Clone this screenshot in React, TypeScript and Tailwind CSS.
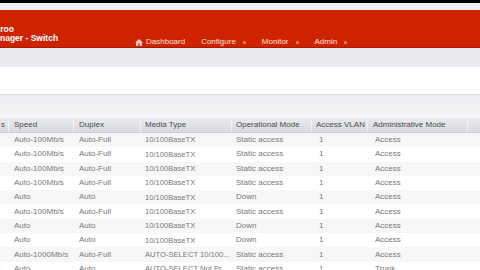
import React from "react";

type Row = {
  speed: string;
  duplex: string;
  media: string;
  mode: string;
  vlan: string;
  admin: string;
};

const rows: Row[] = [
  { speed: "Auto-100Mb/s", duplex: "Auto-Full", media: "10/100BaseTX", mode: "Static access", vlan: "1", admin: "Access" },
  { speed: "Auto-100Mb/s", duplex: "Auto-Full", media: "10/100BaseTX", mode: "Static access", vlan: "1", admin: "Access" },
  { speed: "Auto-100Mb/s", duplex: "Auto-Full", media: "10/100BaseTX", mode: "Static access", vlan: "1", admin: "Access" },
  { speed: "Auto-100Mb/s", duplex: "Auto-Full", media: "10/100BaseTX", mode: "Static access", vlan: "1", admin: "Access" },
  { speed: "Auto", duplex: "Auto", media: "10/100BaseTX", mode: "Down", vlan: "1", admin: "Access" },
  { speed: "Auto-100Mb/s", duplex: "Auto-Full", media: "10/100BaseTX", mode: "Static access", vlan: "1", admin: "Access" },
  { speed: "Auto", duplex: "Auto", media: "10/100BaseTX", mode: "Down", vlan: "1", admin: "Access" },
  { speed: "Auto", duplex: "Auto", media: "10/100BaseTX", mode: "Down", vlan: "1", admin: "Access" },
  { speed: "Auto-1000Mb/s", duplex: "Auto-Full", media: "AUTO-SELECT 10/100...", mode: "Static access", vlan: "1", admin: "Access" },
  { speed: "Auto", duplex: "Auto", media: "AUTO-SELECT Not Pr...", mode: "Static access", vlan: "1", admin: "Trunk" },
];

const NavItem = ({ label, dot = true }: { label: string; dot?: boolean }) => (
  <div className="flex items-center gap-[7px]">
    <span>{label}</span>
    {dot && <span className="w-[3px] h-[3px] rounded-full bg-[#e98a7a]" />}
  </div>
);

const App = () => {
  return (
    <div
      className="w-[480px] h-[270px] overflow-hidden flex flex-col bg-[#eceef2]"
      style={{ fontFamily: '"Liberation Sans", Arial, sans-serif' }}
    >
      <div className="h-[3px] bg-black shrink-0" />
      <div className="h-[7px] bg-[#eef0f5] shrink-0" />

      {/* red header */}
      <div className="h-[38px] shrink-0 bg-[#cf2200] border-b border-[#a51a00] flex text-white">
        <div className="w-[120px] pt-[15px] -ml-[3px] font-bold text-[8.5px] leading-[9px]">
          <div>rroo</div>
          <div className="ml-[3px]">nager - Switch</div>
        </div>
        <div className="flex flex-col pt-[22px]">
          <div className="h-px w-[281px] -ml-[24px] bg-gradient-to-r from-[#cf2200] via-[#ef6a4e] to-[#e4553a]" />
          <div className="flex items-center gap-[16px] text-[8px] mt-[4px] ml-[18px] text-[#fbe4de]">
            <div className="flex items-center gap-[3px]">
              <svg width="8" height="7" viewBox="0 0 8 7">
                <path d="M4 0 L8 3.5 L7 3.5 L7 7 L1 7 L1 3.5 L0 3.5 Z" fill="#f3c8bd" />
                <rect x="3.2" y="4.5" width="1.6" height="2.5" fill="#b54a33" />
              </svg>
              <span>Dashboard</span>
            </div>
            <NavItem label="Configure" />
            <NavItem label="Monitor" />
            <NavItem label="Admin" />
          </div>
        </div>
      </div>

      <div className="h-[19px] shrink-0 bg-[#e8eaef]" />
      <div className="h-[28px] shrink-0 bg-white border-b border-[#dcdde2]" />
      <div className="h-[23px] shrink-0 bg-gradient-to-b from-[#eeeff2] to-[#f6f6f8]" />

      {/* table */}
      <div className="flex-1 bg-white text-[8px] text-[#777]">
        <div className="flex h-[15px] items-center bg-gradient-to-b from-[#e9eaee] to-[#d9dbe1] text-[#4a4a4a] border-b border-[#c9cbd1]">
          <div className="w-[9px] h-full flex items-center border-r border-[#f4f4f6] pl-px">s</div>
          <div className="w-[65px] h-full flex items-center border-r border-[#f4f4f6] pl-[5px]">Speed</div>
          <div className="w-[67px] h-full flex items-center border-r border-[#f4f4f6] pl-[5px]">Duplex</div>
          <div className="w-[91px] h-full flex items-center border-r border-[#f4f4f6] pl-[4px]">Media Type</div>
          <div className="w-[80px] h-full flex items-center border-r border-[#f4f4f6] pl-[4px]">Operational Mode</div>
          <div className="w-[56px] h-full flex items-center border-r border-[#f4f4f6] pl-[4px]">Access VLAN</div>
          <div className="w-[100px] h-full flex items-center border-r border-[#f4f4f6] pl-[5px]">Administrative Mode</div>
          <div className="flex-1" />
        </div>
        {rows.map((r, i) => (
          <div
            key={i}
            className={`flex h-[14.3px] items-center whitespace-nowrap ${i % 2 === 0 ? "bg-[#f7f7f7]" : "bg-white"}`}
          >
            <div className="w-[9px]" />
            <div className="w-[65px] pl-[5px]">{r.speed}</div>
            <div className="w-[67px] pl-[5px]">{r.duplex}</div>
            <div className="w-[91px] pl-[4px] text-[7.6px]">{r.media}</div>
            <div className="w-[80px] pl-[4px]">{r.mode}</div>
            <div className="w-[56px] pl-[7px]">{r.vlan}</div>
            <div className="w-[100px] pl-[7px]">{r.admin}</div>
          </div>
        ))}
      </div>
      <div className="h-[5px] bg-black shrink-0" />
    </div>
  );
};

export default App;
